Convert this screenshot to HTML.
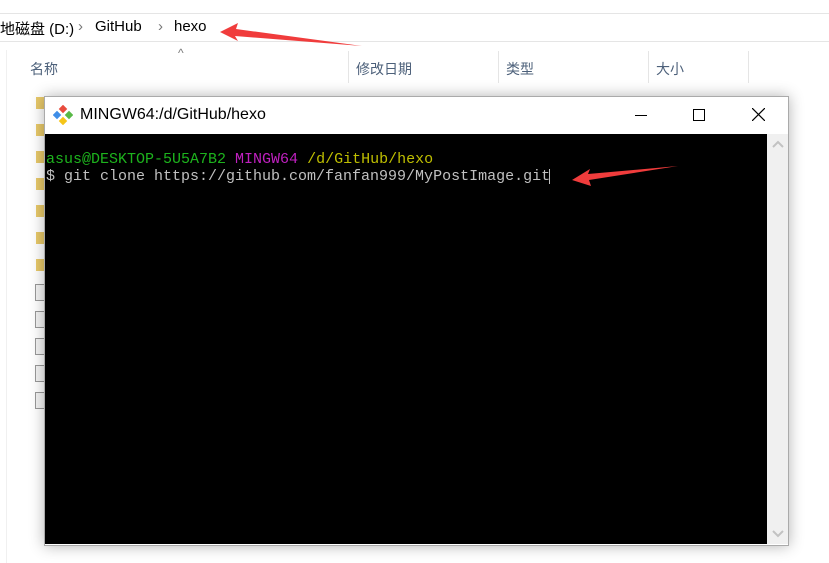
<!DOCTYPE html>
<html><head><meta charset="utf-8"><style>
body{margin:0;width:829px;height:563px;background:#fff;position:relative;overflow:hidden;font-family:"Liberation Sans","Noto Sans CJK SC",sans-serif}
.a{position:absolute}
.hdr{font-size:14px;color:#4c607a}
.mono{font-family:"Liberation Mono",monospace;font-size:15px;line-height:17px;white-space:pre}
</style></head><body>
<div class="a" style="left:0;top:13px;width:829px;height:1px;background:#e5e5e5"></div>
<div class="a" style="left:0;top:41px;width:829px;height:1px;background:#e5e5e5"></div>
<div class="a" style="left:0;top:18px;font-size:15px;color:#000">地磁盘 (D:)</div>
<div class="a" style="left:78px;top:18px;font-size:15px;color:#777">›</div>
<div class="a" style="left:95px;top:18px;font-size:15px;color:#000">GitHub</div>
<div class="a" style="left:158px;top:18px;font-size:15px;color:#777">›</div>
<div class="a" style="left:174px;top:18px;font-size:15px;color:#000">hexo</div>
<div class="a" style="left:6px;top:50px;width:1px;height:513px;background:#f0f0f0"></div>
<div class="a" style="left:178px;top:46px;font-size:12px;color:#777">^</div>
<div class="a hdr" style="left:30px;top:59px">名称</div>
<div class="a" style="left:348px;top:51px;width:1px;height:32px;background:#e5e5e5"></div>
<div class="a hdr" style="left:356px;top:59px">修改日期</div>
<div class="a" style="left:498px;top:51px;width:1px;height:32px;background:#e5e5e5"></div>
<div class="a hdr" style="left:506px;top:59px">类型</div>
<div class="a" style="left:648px;top:51px;width:1px;height:32px;background:#e5e5e5"></div>
<div class="a hdr" style="left:656px;top:59px">大小</div>
<div class="a" style="left:748px;top:51px;width:1px;height:32px;background:#e5e5e5"></div>
<div class="a" style="left:36px;top:97px;width:9px;height:12px;background:#e8c96a"></div>
<div class="a" style="left:36px;top:124px;width:9px;height:12px;background:#e8c96a"></div>
<div class="a" style="left:36px;top:151px;width:9px;height:12px;background:#e8c96a"></div>
<div class="a" style="left:36px;top:178px;width:9px;height:12px;background:#e8c96a"></div>
<div class="a" style="left:36px;top:205px;width:9px;height:12px;background:#e8c96a"></div>
<div class="a" style="left:36px;top:232px;width:9px;height:12px;background:#e8c96a"></div>
<div class="a" style="left:36px;top:259px;width:9px;height:12px;background:#e8c96a"></div>
<div class="a" style="left:35px;top:284px;width:9px;height:15px;border:1px solid #999;background:#f3f3f3"></div>
<div class="a" style="left:35px;top:311px;width:9px;height:15px;border:1px solid #999;background:#f3f3f3"></div>
<div class="a" style="left:35px;top:338px;width:9px;height:15px;border:1px solid #999;background:#f3f3f3"></div>
<div class="a" style="left:35px;top:365px;width:9px;height:15px;border:1px solid #999;background:#f3f3f3"></div>
<div class="a" style="left:35px;top:392px;width:9px;height:15px;border:1px solid #999;background:#f3f3f3"></div>
<div class="a" style="left:44px;top:96px;width:743px;height:448px;border:1px solid #aaa;background:#fff;box-shadow:0 0 14px rgba(0,0,0,.3)"></div>
<svg class="a" style="left:53px;top:105px" width="20" height="20" viewBox="0 0 20 20"><rect x="7" y="1" width="6" height="6" fill="#e84c3d" transform="rotate(45 10 4)"/><rect x="1" y="7" width="6" height="6" fill="#3f8ee8" transform="rotate(45 4 10)"/><rect x="13" y="7" width="6" height="6" fill="#58b947" transform="rotate(45 16 10)"/><rect x="7" y="13" width="6" height="6" fill="#f5c518" transform="rotate(45 10 16)"/></svg>
<div class="a" style="left:80px;top:106px;font-size:16px;color:#000">MINGW64:/d/GitHub/hexo</div>
<div class="a" style="left:635px;top:115px;width:12px;height:1px;background:#000"></div>
<div class="a" style="left:693px;top:109px;width:10px;height:10px;border:1px solid #000"></div>
<svg class="a" style="left:752px;top:108px" width="13" height="13"><path d="M0 0L13 13M13 0L0 13" stroke="#000" stroke-width="1.2"/></svg>
<div class="a" style="left:45px;top:134px;width:722px;height:410px;background:#000"></div>
<div class="a" style="left:767px;top:134px;width:21px;height:410px;background:#f0f0f0"></div>
<svg class="a" style="left:772px;top:140px" width="12" height="8"><path d="M1 7L6 2L11 7" stroke="#c2c2c2" stroke-width="2" fill="none"/></svg>
<svg class="a" style="left:772px;top:530px" width="12" height="8"><path d="M1 1L6 6L11 1" stroke="#c2c2c2" stroke-width="2" fill="none"/></svg>
<div class="a mono" style="left:46px;top:151px"><span style="color:#1db31d">asus@DESKTOP-5U5A7B2</span> <span style="color:#c020c0">MINGW64</span> <span style="color:#bfbf00">/d/GitHub/hexo</span>
<span style="color:#c0c0c0">$ git clone https://github.com/fanfan999/MyPostImage.git</span></div>
<div class="a" style="left:549px;top:169px;width:1px;height:15px;background:#c0c0c0"></div>
<svg class="a" style="left:0;top:0" width="829" height="563"><path d="M220 32L238 23L236 29L362 46L235 36L238 41Z" fill="#f03c3c"/><path d="M572 180L590 169L588 174L678 166L589 180L591 186Z" fill="#f03c3c"/></svg>
</body></html>
